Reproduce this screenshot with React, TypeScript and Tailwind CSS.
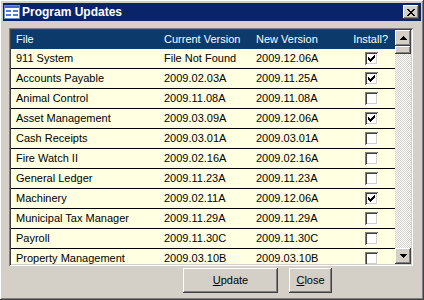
import React from 'react';

const rows = [
    { name: '911 System', current: 'File Not Found', latest: '2009.12.06A', install: true },
    { name: 'Accounts Payable', current: '2009.02.03A', latest: '2009.11.25A', install: true },
    { name: 'Animal Control', current: '2009.11.08A', latest: '2009.11.08A', install: false },
    { name: 'Asset Management', current: '2009.03.09A', latest: '2009.12.06A', install: true },
    { name: 'Cash Receipts', current: '2009.03.01A', latest: '2009.03.01A', install: false },
    { name: 'Fire Watch II', current: '2009.02.16A', latest: '2009.02.16A', install: false },
    { name: 'General Ledger', current: '2009.11.23A', latest: '2009.11.23A', install: false },
    { name: 'Machinery', current: '2009.02.11A', latest: '2009.12.06A', install: true },
    { name: 'Municipal Tax Manager', current: '2009.11.29A', latest: '2009.11.29A', install: false },
    { name: 'Payroll', current: '2009.11.30C', latest: '2009.11.30C', install: false },
    { name: 'Property Management', current: '2009.03.10B', latest: '2009.03.10B', install: false },
];

// bordure 3D "classique" façon Windows
const raised = 'shadow-[inset_-1px_-1px_#404040,inset_1px_1px_#ffffff,inset_-2px_-2px_#808080,inset_2px_2px_#d4d0c8]';

const Checkbox = ({ checked }: { checked: boolean }) => (
    <div className="w-[13px] h-[13px] bg-white shadow-[inset_1px_1px_#808080,inset_-1px_-1px_#ffffff,inset_2px_2px_#404040,inset_-2px_-2px_#d4d0c8] flex items-center justify-center">
        {checked && (
            <svg width="7" height="7" viewBox="0 0 7 7">
                <path d="M0 2h1v1h1v1h1v-1h1v-1h1v-1h1v-1h1v3h-1v1h-1v1h-1v1h-1v1h-1v-1h-1v-1h-1z" fill="#000" />
            </svg>
        )}
    </div>
);

const Arrow = ({ up }: { up: boolean }) => (
    <svg width="7" height="4" viewBox="0 0 7 4">
        {up ? (
            <path d="M3 0h1v1h1v1h1v1h1v1h-7v-1h1v-1h1v-1h1z" fill="#000" />
        ) : (
            <path d="M0 0h7v1h-1v1h-1v1h-1v1h-1v-1h-1v-1h-1v-1h-1z" fill="#000" />
        )}
    </svg>
);

const App = () => {
    return (
        <div
            className={`w-[424px] h-[300px] bg-[#d4d0c8] flex flex-col p-[3px] ${raised}`}
            style={{ fontFamily: '"Liberation Sans", Arial, sans-serif' }}
        >
            {/* Barre de titre */}
            <div className="h-[18px] bg-[#0a246a] flex items-center pl-[1px] pr-[2px]">
                <svg width="16" height="14" viewBox="0 0 16 14" className="mr-[2px]">
                    <rect x="0.5" y="0.5" width="15" height="13" fill="#ffffff" stroke="#6d8dc8" />
                    <rect x="1" y="1" width="14" height="2" fill="#3a6bc8" />
                    <rect x="2" y="5" width="5" height="2" fill="#4f7fd0" />
                    <rect x="9" y="5" width="5" height="2" fill="#4f7fd0" />
                    <rect x="2" y="9" width="5" height="2" fill="#4f7fd0" />
                    <rect x="9" y="9" width="5" height="2" fill="#4f7fd0" />
                </svg>
                <span className="text-white font-bold text-[12px] leading-none">Program Updates</span>
                <div className={`ml-auto w-[16px] h-[14px] bg-[#d4d0c8] flex items-center justify-center ${raised}`}>
                    <svg width="8" height="7" viewBox="0 0 8 7">
                        <path d="M0 0h2v1h1v1h2v-1h1v-1h2v1h-1v1h-1v1h-1v1h1v1h1v1h1v1h-2v-1h-1v-1h-2v1h-1v1h-2v-1h1v-1h1v-1h1v-1h-1v-1h-1v-1h-1z" fill="#000" />
                    </svg>
                </div>
            </div>

            {/* Grille */}
            <div className="mt-[7px] ml-[6px] w-[404px] h-[238px] p-[2px] shadow-[inset_1px_1px_#808080,inset_-1px_-1px_#ffffff,inset_2px_2px_#404040,inset_-2px_-2px_#d4d0c8] flex">
                <div className="w-[384px] h-[234px] overflow-hidden bg-[#ffffe1] text-[11px] text-black">
                    <div className="h-[19px] bg-[#0c3a6b] text-white grid grid-cols-[148px_92px_144px] items-center">
                        <span className="pl-[5px]">File</span>
                        <span className="pl-[5px]">Current Version</span>
                        <div className="flex justify-between pl-[5px] pr-[7px]">
                            <span>New Version</span>
                            <span>Install?</span>
                        </div>
                    </div>
                    {rows.map((row) => (
                        <div key={row.name} className="h-[20px] border-b border-black grid grid-cols-[148px_92px_94px_50px] items-center">
                            <span className="pl-[5px]">{row.name}</span>
                            <span className="pl-[5px]">{row.current}</span>
                            <span className="pl-[5px]">{row.latest}</span>
                            <div className="pl-[20px]">
                                <Checkbox checked={row.install} />
                            </div>
                        </div>
                    ))}
                </div>
                {/* Barre de défilement */}
                <div className="w-[16px] h-[234px] flex flex-col bg-[repeating-conic-gradient(#d4d0c8_0_25%,#ffffff_0_50%)] bg-[length:2px_2px]">
                    <div className={`h-[16px] bg-[#d4d0c8] flex items-center justify-center ${raised}`}>
                        <Arrow up />
                    </div>
                    <div className={`h-[8px] bg-[#d4d0c8] ${raised}`} />
                    <div className="flex-1" />
                    <div className={`h-[16px] bg-[#d4d0c8] flex items-center justify-center ${raised}`}>
                        <Arrow up={false} />
                    </div>
                </div>
            </div>

            {/* Boutons */}
            <div className="flex gap-[11px] ml-[180px] mt-[2px] text-[11px] text-black">
                <button className={`w-[95px] h-[25px] bg-[#d4d0c8] ${raised}`}>
                    <span className="underline">U</span>pdate
                </button>
                <button className={`w-[43px] h-[25px] bg-[#d4d0c8] ${raised}`}>
                    <span className="underline">C</span>lose
                </button>
            </div>
        </div>
    );
};

export default App;
